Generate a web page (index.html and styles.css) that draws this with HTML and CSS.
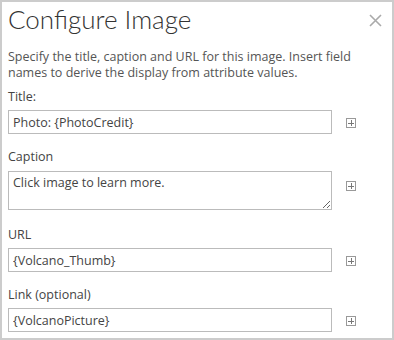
FILE: index.html
```html
<!DOCTYPE html>
<html lang="en">
<head>
    <meta charset="UTF-8">
    <meta name="viewport" content="width=device-width, initial-scale=1.0">
    <title>Configure Image</title>
    <link rel="stylesheet" href="styles.css">
</head>
<body>
    <div class="dialog">
        <div class="dialog-header">
            <h1>Configure Image</h1>
            <span class="close-btn" title="Close">
                <svg width="13" height="13" viewBox="0 0 13 13">
                    <path d="M1 1 L12 12 M12 1 L1 12" stroke="#aaa" stroke-width="1.6" fill="none"/>
                </svg>
            </span>
        </div>

        <p class="intro">Specify the title, caption and URL for this image. Insert field names to derive the display from attribute values.</p>

        <div class="form-group">
            <label for="title">Title:</label>
            <div class="field-row">
                <input type="text" id="title" value="Photo: {PhotoCredit}">
                <span class="insert-btn"></span>
            </div>
        </div>

        <div class="form-group caption-group">
            <label for="caption">Caption</label>
            <div class="field-row">
                <textarea id="caption">Click image to learn more.</textarea>
                <span class="insert-btn"></span>
            </div>
        </div>

        <div class="form-group">
            <label for="url">URL</label>
            <div class="field-row">
                <input type="text" id="url" value="{Volcano_Thumb}">
                <span class="insert-btn"></span>
            </div>
        </div>

        <div class="form-group">
            <label for="link">Link (optional)</label>
            <div class="field-row">
                <input type="text" id="link" value="{VolcanoPicture}">
                <span class="insert-btn"></span>
            </div>
        </div>
    </div>
</body>
</html>
```

FILE: styles.css
```css
* {
    margin: 0;
    padding: 0;
    box-sizing: border-box;
}

body {
    font-family: 'Open Sans', 'Noto Sans', sans-serif;
    background: white;
}

.dialog {
    width: 394px;
    height: 340px;
    border: 2px solid #cccccc;
    padding: 1px 6px 0 6px;
    background: white;
}

.dialog-header {
    display: flex;
    justify-content: space-between;
    align-items: flex-start;
}

.dialog-header h1 {
    font-family: 'Lato', sans-serif;
    font-weight: 300;
    font-size: 26px;
    line-height: 32px;
    color: #333;
}

.close-btn {
    margin-top: 7px;
    margin-right: 4px;
    cursor: pointer;
}

.intro {
    font-size: 12.5px;
    line-height: 16px;
    color: #555;
    margin-top: 14px;
    margin-bottom: 8px;
}

.form-group {
    margin-bottom: 15px;
}

.caption-group {
    margin-bottom: 17px;
}

.form-group label {
    display: block;
    font-size: 12.5px;
    line-height: 16px;
    color: #444;
    margin-bottom: 5px;
}

.caption-group label {
    margin-bottom: 6px;
}

.field-row {
    display: flex;
    align-items: flex-start;
    gap: 14px;
}

.field-row input,
.field-row textarea {
    width: 324px;
    height: 24px;
    border: 1px solid #bbbbbb;
    padding: 0 4px;
    font-family: 'Open Sans', 'Noto Sans', sans-serif;
    font-size: 12.5px;
    color: #444;
    background: white;
}

.field-row textarea {
    height: 39px;
    padding-top: 3px;
    line-height: 16px;
    resize: vertical;
}

.insert-btn {
    width: 10px;
    height: 10px;
    margin-top: 8px;
    border: 1px solid #999;
    position: relative;
    cursor: pointer;
}

.caption-group .insert-btn {
    margin-top: 10px;
}

.insert-btn::before,
.insert-btn::after {
    content: '';
    position: absolute;
    background: #777;
}

.insert-btn::before {
    left: 1px;
    top: 3.5px;
    width: 6px;
    height: 1px;
}

.insert-btn::after {
    left: 3.5px;
    top: 1px;
    width: 1px;
    height: 6px;
}
```
